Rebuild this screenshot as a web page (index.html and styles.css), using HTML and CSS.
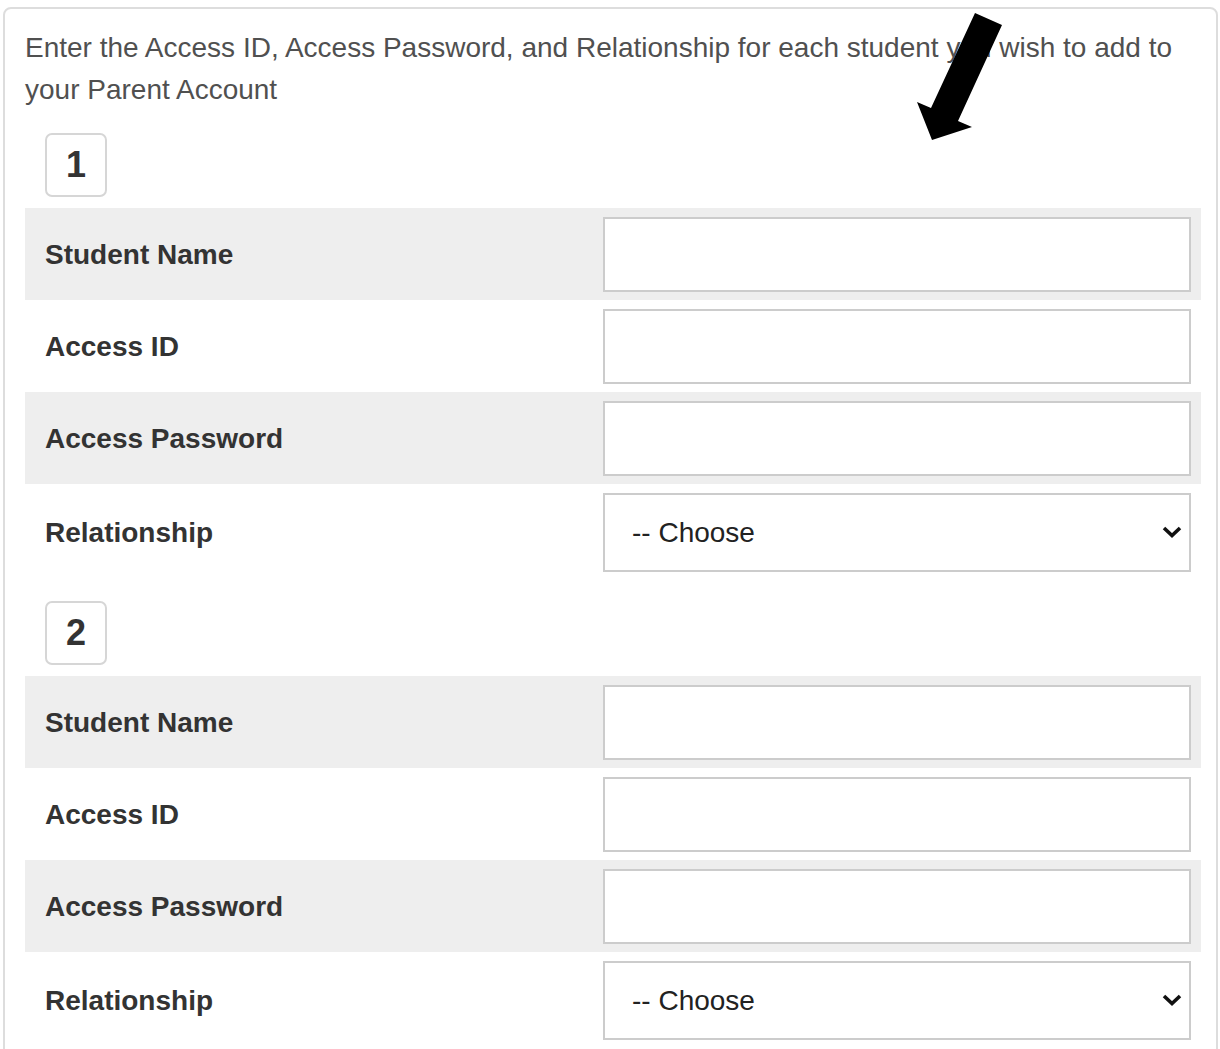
FILE: index.html
```html
<!DOCTYPE html>
<html lang="en">
<head>
<meta charset="utf-8">
<title>Add Students</title>
<link rel="stylesheet" href="styles.css">
</head>
<body>
<div class="card">
  <p class="intro">Enter the Access ID, Access Password, and Relationship for each student you wish to add to your Parent Account</p>

  <section class="student">
    <div class="num">1</div>
    <div class="row shaded">
      <label class="lbl" for="name1">Student Name</label>
      <input class="field" id="name1" type="text">
    </div>
    <div class="row">
      <label class="lbl" for="id1">Access ID</label>
      <input class="field" id="id1" type="text">
    </div>
    <div class="row shaded">
      <label class="lbl" for="pw1">Access Password</label>
      <input class="field" id="pw1" type="password">
    </div>
    <div class="row">
      <label class="lbl" for="rel1">Relationship</label>
      <div class="select-wrap">
        <select class="field choice" id="rel1">
          <option>-- Choose</option>
          <option>Mother</option>
          <option>Father</option>
          <option>Guardian</option>
        </select>
        <svg class="chev" width="20" height="12" viewBox="0 0 20 12"><polyline points="2,2 10,9.5 18,2" fill="none" stroke="#111" stroke-width="3.6"/></svg>
      </div>
    </div>
  </section>

  <section class="student">
    <div class="num">2</div>
    <div class="row shaded">
      <label class="lbl" for="name2">Student Name</label>
      <input class="field" id="name2" type="text">
    </div>
    <div class="row">
      <label class="lbl" for="id2">Access ID</label>
      <input class="field" id="id2" type="text">
    </div>
    <div class="row shaded">
      <label class="lbl" for="pw2">Access Password</label>
      <input class="field" id="pw2" type="password">
    </div>
    <div class="row">
      <label class="lbl" for="rel2">Relationship</label>
      <div class="select-wrap">
        <select class="field choice" id="rel2">
          <option>-- Choose</option>
          <option>Mother</option>
          <option>Father</option>
          <option>Guardian</option>
        </select>
        <svg class="chev" width="20" height="12" viewBox="0 0 20 12"><polyline points="2,2 10,9.5 18,2" fill="none" stroke="#111" stroke-width="3.6"/></svg>
      </div>
    </div>
  </section>
</div>

<!-- pointer arrow drawn over the form -->
<svg class="pointer" width="1220" height="160" viewBox="0 0 1220 160">
  <polygon points="975,13 1002,25 958,121 972,127 932,140 917,102 931,108" fill="#000"/>
</svg>
</body>
</html>
```

FILE: styles.css
```css
html, body {
  margin: 0;
  padding: 0;
  background: #fff;
}

body {
  font-family: "Liberation Sans", Arial, sans-serif;
  font-size: 28px;
  color: #333;
  position: relative;
}

.card {
  box-sizing: border-box;
  width: 1215px;
  margin: 7px 0 0 3px;
  padding: 18px 15px 24px 20px;
  border: 2px solid #ddd;
  border-radius: 8px;
}

.intro {
  margin: 0;
  line-height: 42px;
  color: #505050;
}

.student {
  display: flex;
  flex-direction: column;
}

.num {
  box-sizing: border-box;
  width: 62px;
  height: 64px;
  margin: 22px 0 11px 20px;
  border: 2px solid #d6d6d6;
  border-radius: 7px;
  display: flex;
  align-items: center;
  justify-content: center;
  font-weight: bold;
  font-size: 36px;
  color: #333;
}

.student + .student .num {
  margin-top: 21px;
}

.row {
  display: grid;
  grid-template-columns: 578px 588px;
  align-items: center;
  padding: 9px 0 8px;
}

.row.shaded {
  background: #eee;
}

.lbl {
  padding-left: 20px;
  font-weight: bold;
  color: #333;
}

.field {
  box-sizing: border-box;
  width: 588px;
  height: 75px;
  margin: 0;
  border: 2px solid #ccc;
  background: #fff;
  font: inherit;
  font-size: 28px;
  color: #222;
  outline: none;
}

.select-wrap {
  position: relative;
  width: 588px;
}

.choice {
  display: block;
  height: 79px;
  padding: 0 40px 0 27px;
  appearance: none;
  -webkit-appearance: none;
  border-radius: 0;
}

.chev {
  position: absolute;
  right: 9px;
  top: 33px;
  pointer-events: none;
}

.pointer {
  position: absolute;
  left: 0;
  top: 0;
  pointer-events: none;
}
```
